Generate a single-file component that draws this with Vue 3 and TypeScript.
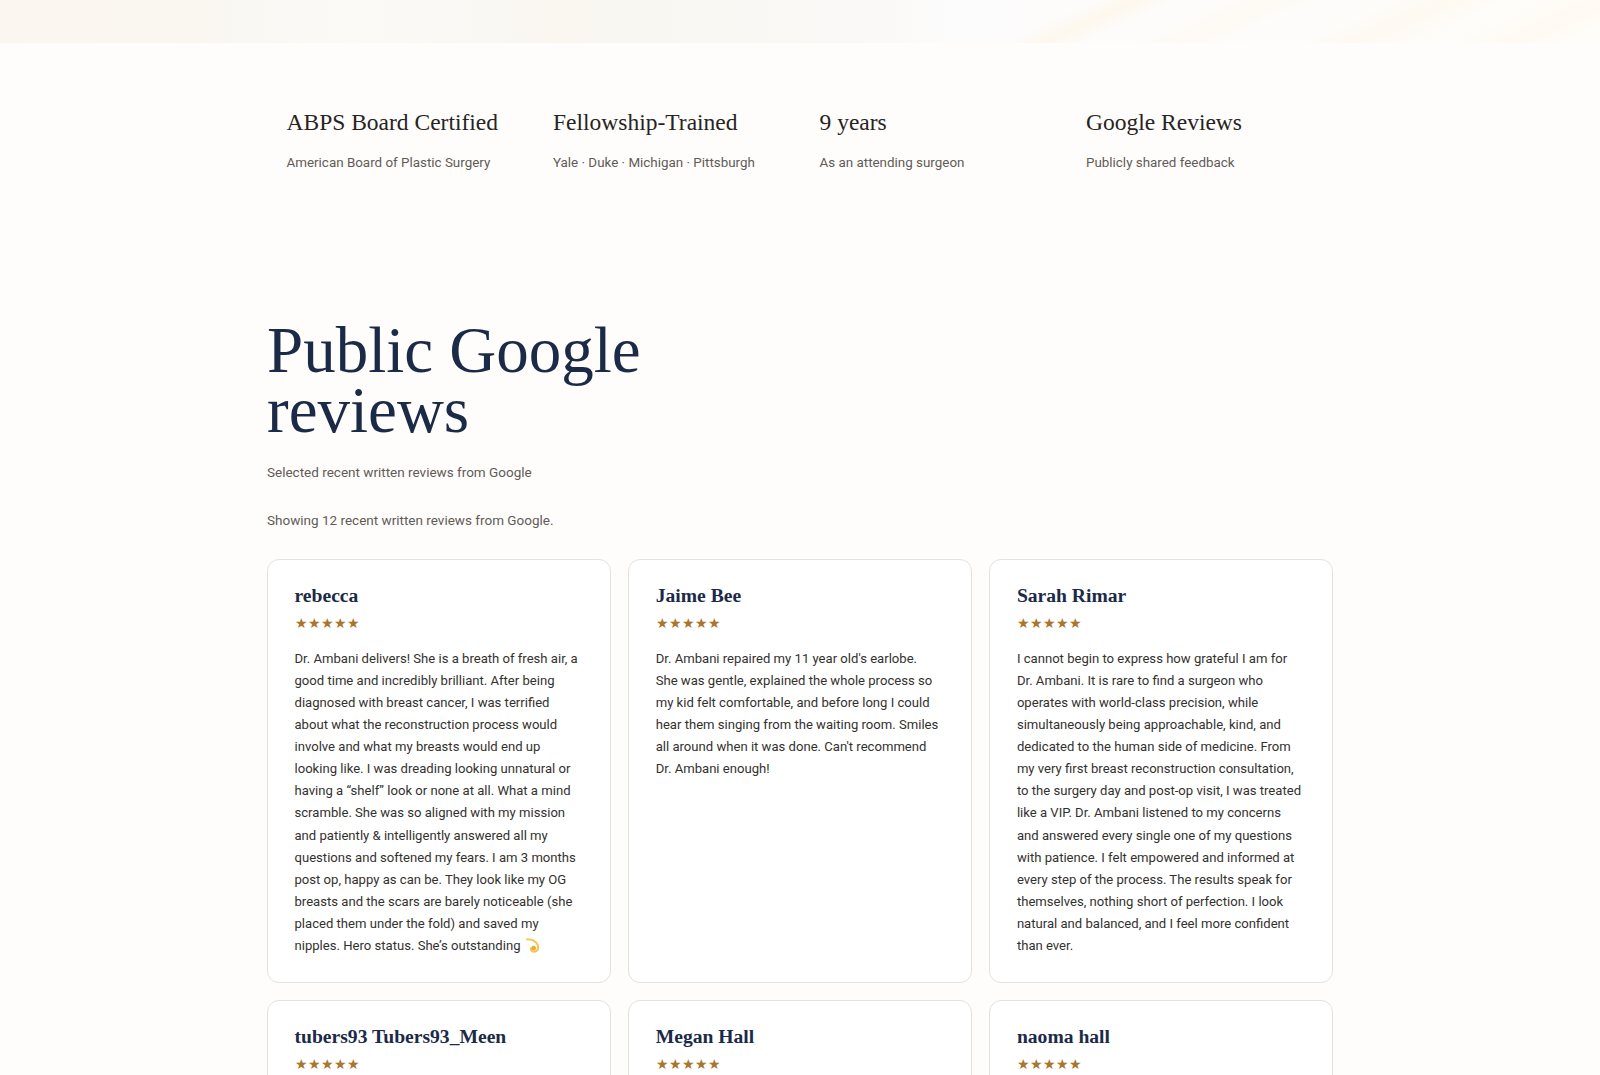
<script setup lang="ts">
interface Review {
  name: string;
  lines: string[];
  emoji?: boolean;
}

const stats = [
  { title: 'ABPS Board Certified', sub: 'American Board of Plastic Surgery' },
  { title: 'Fellowship-Trained', sub: 'Yale · Duke · Michigan · Pittsburgh' },
  { title: '9 years', sub: 'As an attending surgeon' },
  { title: 'Google Reviews', sub: 'Publicly shared feedback' },
];

const reviews: Review[] = [
  {
    name: 'rebecca',
    emoji: true,
    lines: [
      'Dr. Ambani delivers! She is a breath of fresh air, a',
      'good time and incredibly brilliant. After being',
      'diagnosed with breast cancer, I was terrified',
      'about what the reconstruction process would',
      'involve and what my breasts would end up',
      'looking like. I was dreading looking unnatural or',
      'having a “shelf” look or none at all. What a mind',
      'scramble. She was so aligned with my mission',
      'and patiently & intelligently answered all my',
      'questions and softened my fears. I am 3 months',
      'post op, happy as can be. They look like my OG',
      'breasts and the scars are barely noticeable (she',
      'placed them under the fold) and saved my',
      'nipples. Hero status. She’s outstanding',
    ],
  },
  {
    name: 'Jaime Bee',
    lines: [
      "Dr. Ambani repaired my 11 year old's earlobe.",
      'She was gentle, explained the whole process so',
      'my kid felt comfortable, and before long I could',
      'hear them singing from the waiting room. Smiles',
      "all around when it was done. Can't recommend",
      'Dr. Ambani enough!',
    ],
  },
  {
    name: 'Sarah Rimar',
    lines: [
      'I cannot begin to express how grateful I am for',
      'Dr. Ambani. It is rare to find a surgeon who',
      'operates with world-class precision, while',
      'simultaneously being approachable, kind, and',
      'dedicated to the human side of medicine. From',
      'my very first breast reconstruction consultation,',
      'to the surgery day and post-op visit, I was treated',
      'like a VIP. Dr. Ambani listened to my concerns',
      'and answered every single one of my questions',
      'with patience. I felt empowered and informed at',
      'every step of the process. The results speak for',
      'themselves, nothing short of perfection. I look',
      'natural and balanced, and I feel more confident',
      'than ever.',
    ],
  },
  { name: 'tubers93 Tubers93_Meen', lines: [] },
  { name: 'Megan Hall', lines: [] },
  { name: 'naoma hall', lines: [] },
];
</script>

<template>
  <div class="page">
    <div class="hero-strip"></div>

    <section class="stats">
      <div v-for="s in stats" :key="s.title" class="stat">
        <h3>{{ s.title }}</h3>
        <p>{{ s.sub }}</p>
      </div>
    </section>

    <section class="reviews">
      <h2>Public Google<br />reviews</h2>
      <p class="lead">Selected recent written reviews from Google</p>
      <p class="count">Showing 12 recent written reviews from Google.</p>

      <div class="grid">
        <article v-for="r in reviews" :key="r.name" class="card">
          <h4>{{ r.name }}</h4>
          <div class="stars">★★★★★</div>
          <div class="body">
            <div v-for="(line, i) in r.lines" :key="i" class="line">
              {{ line }}
              <svg v-if="r.emoji && i === r.lines.length - 1" class="dizzy" viewBox="0 0 16 16" width="15" height="15">
                <path d="M2 1.500c5-.6 10 2 11.800 6.500 1.200 3.300-.6 6.600-3.800 6.600-2.300 0-4-1.600-4-3.500"
                  fill="none" stroke="#f6c445" stroke-width="2" stroke-linecap="round" />
                <circle cx="9.200" cy="10.800" r="2.600" fill="#f2a93b" />
              </svg>
            </div>
          </div>
        </article>
      </div>
    </section>
  </div>
</template>

<style scoped>
.page {
  height: 1075px;
  overflow: hidden;
  background: #fffdfb;
  font-family: Roboto, sans-serif;
}

.hero-strip {
  height: 43px;
  background:
    linear-gradient(156deg, transparent 64.700%, rgba(253, 240, 215, 0.4) 67.100%, transparent 69.500%),
    linear-gradient(156deg, transparent 72%, rgba(253, 243, 226, 0.3) 75%, transparent 78%),
    linear-gradient(156deg, transparent 82%, rgba(253, 242, 224, 0.35) 85.400%, transparent 89%),
    linear-gradient(156deg, transparent 91%, rgba(253, 242, 224, 0.3) 94.800%, transparent 98%),
    linear-gradient(90deg, #fcf6f0 0%, #faf7f1 12%, #fbfaf7 22%, #faf7f1 35%, #f9f8f3 45%, #faf9f8 55%, #fdfcfc 60%, #fffdf9 100%);
}

.stats {
  width: 1066px;
  margin: 0 auto;
  padding-top: 61px;
  display: grid;
  grid-template-columns: repeat(4, minmax(0, 1fr));
}

.stat {
  padding: 0 19px 0 19.500px;
}

.stat h3 {
  margin: 0;
  font-family: "Liberation Serif", serif;
  font-size: 23.500px;
  line-height: 36px;
  font-weight: 400;
  color: #26241f;
}

.stat p {
  margin: 13px 0 0;
  font-size: 13.400px;
  line-height: 20px;
  color: #5f5b57;
}

.reviews {
  width: 1066px;
  margin: 0 auto;
  padding-top: 147px;
}

.reviews h2 {
  margin: 0;
  font-family: "Liberation Serif", serif;
  font-size: 65px;
  line-height: 60px;
  font-weight: 400;
  color: #1b2a47;
}

.lead,
.count {
  margin: 0;
  font-size: 13.500px;
  line-height: 20px;
  color: #5f5b57;
}

.lead {
  margin-top: 22px;
}

.count {
  margin-top: 28px;
}

.grid {
  margin-top: 29px;
  display: grid;
  grid-template-columns: repeat(3, minmax(0, 1fr));
  gap: 16.600px 17.600px;
}

.card {
  min-height: 424px;
  padding: 24px 26.500px;
  box-sizing: border-box;
  background: #fff;
  border: 1px solid #e4e2de;
  border-radius: 12px;
}

.card h4 {
  margin: 0;
  font-family: "Liberation Serif", serif;
  font-size: 19.600px;
  line-height: 24px;
  font-weight: 700;
  color: #1b2a47;
}

.stars {
  margin-top: 5px;
  font-size: 13.500px;
  line-height: 20px;
  color: #a9762a;
}

.body {
  margin-top: 14.500px;
  font-size: 13.100px;
  line-height: 22.130px;
  color: #33312e;
}

.line {
  white-space: nowrap;
}

.dizzy {
  vertical-align: -3px;
  margin-left: 1px;
}
</style>
